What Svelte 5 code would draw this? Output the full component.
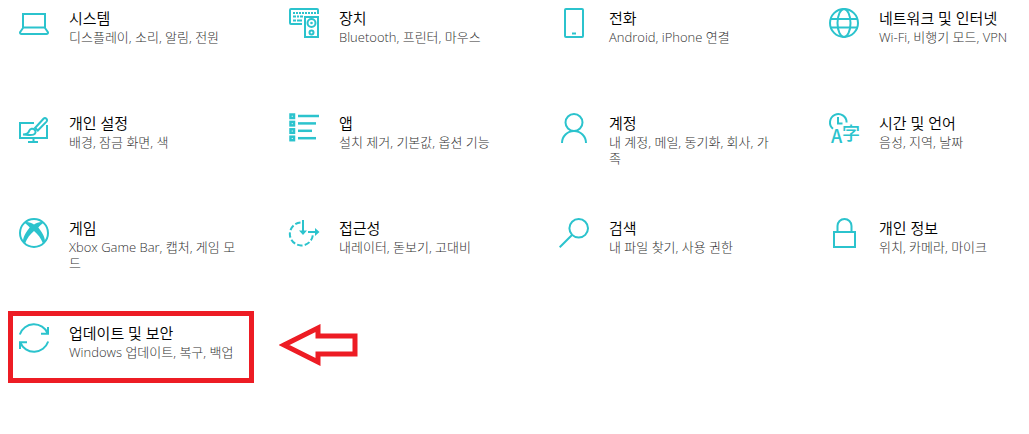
<script lang="ts">
  type Category = {
    icon: string;
    title: string;
    detail: string;
    marked?: boolean;
  };

  const categories: Category[] = [
    { icon: "system", title: "시스템", detail: "디스플레이, 소리, 알림, 전원" },
    { icon: "devices", title: "장치", detail: "Bluetooth, 프린터, 마우스" },
    { icon: "phone", title: "전화", detail: "Android, iPhone 연결" },
    { icon: "network", title: "네트워크 및 인터넷", detail: "Wi-Fi, 비행기 모드, VPN" },
    { icon: "personal", title: "개인 설정", detail: "배경, 잠금 화면, 색" },
    { icon: "apps", title: "앱", detail: "설치 제거, 기본값, 옵션 기능" },
    { icon: "accounts", title: "계정", detail: "내 계정, 메일, 동기화, 회사, 가족" },
    { icon: "time", title: "시간 및 언어", detail: "음성, 지역, 날짜" },
    { icon: "gaming", title: "게임", detail: "Xbox Game Bar, 캡처, 게임 모드" },
    { icon: "access", title: "접근성", detail: "내레이터, 돋보기, 고대비" },
    { icon: "search", title: "검색", detail: "내 파일 찾기, 사용 권한" },
    { icon: "privacy", title: "개인 정보", detail: "위치, 카메라, 마이크" },
    { icon: "update", title: "업데이트 및 보안", detail: "Windows 업데이트, 복구, 백업", marked: true },
  ];
</script>

<main>
  {#each categories as category}
    <a href="#{category.icon}" class:marked={category.marked}>
      <svg class="icon" viewBox="0 0 30 30" aria-hidden="true">
        {#if category.icon == "system"}
          <path d="M4 19.5V6H26V19.5ZM4 20L1 24.3Q1 26 2.5 26H27.5Q29 26 29 24.3L26 20" />
        {:else if category.icon == "devices"}
          <path d="M13 16H2Q1 16 1 15V2Q1 1 2 1H28Q29 1 29 2V6" />
          <path d="M4 5H27" stroke-dasharray="2 1" />
          <path d="M4 8.5H14" stroke-dasharray="3 1 2 1" />
          <path d="M4 12.5H7M8 12.5H13" />
          <path d="M16 9H29V29H16Z" />
          <circle cx="22.5" cy="15" r="4" />
          <circle class="fill" cx="22.5" cy="15" r="1.3" />
          <circle cx="22.5" cy="24.5" r="2" />
        {:else if category.icon == "phone"}
          <rect x="6" y="1" width="18" height="28" rx="1" />
          <path d="M13 25.5H17" />
        {:else if category.icon == "network"}
          <circle cx="15" cy="15" r="14" />
          <ellipse cx="15" cy="15" rx="6.5" ry="14" />
          <path d="M2 11H28M2 19.5H28" />
        {:else if category.icon == "personal"}
          <path d="M15 10H1V25H28V12M14.5 25V29M9 29H19" />
          <path d="M16 15L24.5 5.8A2 2 0 0 1 27.5 8.6L18.8 17.5ZM15.5 14.5L19.5 18" />
          <path d="M4 21.5C8 21.5 9.5 20.5 10.2 17.8C11 15.5 14 15 15.6 16.8C17.4 18.5 16.6 21 14.5 21.6C12 22.3 8 21.7 4 21.5Z" />
        {:else if category.icon == "apps"}
          {#each [30, 27, 23, 27] as end, i}
            <rect x="1.5" y={i * 7.4 + 1.5} width="3.5" height="3.5" stroke-width="2.5" />
            <path d="M9 {i * 7.4 + 3}H{end}" stroke-width="2.5" />
          {/each}
        {:else if category.icon == "accounts"}
          <circle cx="15" cy="9.5" r="8.5" />
          <path d="M3 30A12 12 0 0 1 27 30" />
        {:else if category.icon == "time"}
          <path d="M4 15.8A8.3 8.3 0 1 1 17.6 9.5M9 4V10.5H13.5" />
          <text x="2" y="30" font-size="18">A</text>
          <text x="13" y="27" font-size="18">字</text>
        {:else if category.icon == "gaming"}
          <circle cx="15" cy="15" r="14" />
          <path class="fill" d="M5 4.5C8 3 12 4.5 15 6.5C18 4.5 22 3 25 4.5C23 5.5 21 7.5 19.3 9.5C23 14 26 19 26 23.5L24 25.5C22 20 18.5 16 15 13C11.5 16 8 20 6 25.5L4 23.5C4 19 7 14 10.7 9.5C9 7.5 7 5.5 5 4.5Z" />
        {:else if category.icon == "access"}
          <path d="M11.5 4.5A11.5 11.5 0 1 0 23.8 17" stroke-dasharray="5.5 2.2" />
          <path d="M14 2V14M19 14H28" />
          <path class="fill" d="M10 12.5H18L14 17ZM26 10V18L30.5 14Z" />
        {:else if category.icon == "search"}
          <circle cx="19.7" cy="10.3" r="9.3" />
          <path d="M13 17L0.7 29.3" />
        {:else if category.icon == "privacy"}
          <path d="M5 14H26V29H5ZM8.5 14V8A7 7 0 0 1 22.5 8V14" />
        {:else}
          <path d="M0.8 11.5A15 15 0 0 1 28.8 10.5M29 4V10.8H22" />
          <path d="M29.2 18.5A15 15 0 0 1 1.2 19.5M1 26V19.2H8" />
        {/if}
      </svg>
      <div class="label">
        <h2>{category.title}</h2>
        <p>{category.detail}</p>
      </div>
      {#if category.marked}
        <svg class="pointer" viewBox="0 0 80 42" aria-hidden="true">
          <path d="M5 21L39 4V12H76V30H39V38Z" />
        </svg>
      {/if}
    </a>
  {/each}
</main>

<style>
  :global(body) {
    margin: 0;
    background: #fff;
    overflow: hidden;
  }
  main {
    display: grid;
    grid-template-columns: 9fr 9fr 9fr 7fr;
    row-gap: 33px;
    margin: -4px 1px 0 8px;
    font-family: "Open Sans", "Noto Sans CJK KR", sans-serif;
  }
  a {
    display: flex;
    gap: 20px;
    box-sizing: border-box;
    min-height: 72px;
    padding: 12px 0 0 11px;
    color: #000;
    text-decoration: none;
  }
  .marked {
    position: relative;
    margin-right: 24px;
    box-shadow: inset 0 0 0 5px #ed1c24;
  }
  .icon {
    flex: none;
    width: 30px;
    height: 30px;
    overflow: visible;
    fill: none;
    stroke: #2bc3cd;
    stroke-width: 2;
  }
  .icon .fill,
  .icon text {
    fill: #2bc3cd;
    stroke: none;
  }
  .icon text {
    font-family: "Noto Sans CJK KR", sans-serif;
    font-weight: 500;
  }
  .label {
    max-width: 170px;
  }
  h2 {
    margin: 0;
    font-size: 15px;
    line-height: 20px;
    font-weight: 350;
  }
  p {
    margin: 1px 0 0;
    font-size: 13px;
    line-height: 16px;
    font-weight: 300;
    color: #333;
  }
  .pointer {
    position: absolute;
    top: 13px;
    left: calc(100% + 25px);
    width: 80px;
    height: 42px;
    fill: none;
    stroke: #ed1c24;
    stroke-width: 5;
  }
</style>
